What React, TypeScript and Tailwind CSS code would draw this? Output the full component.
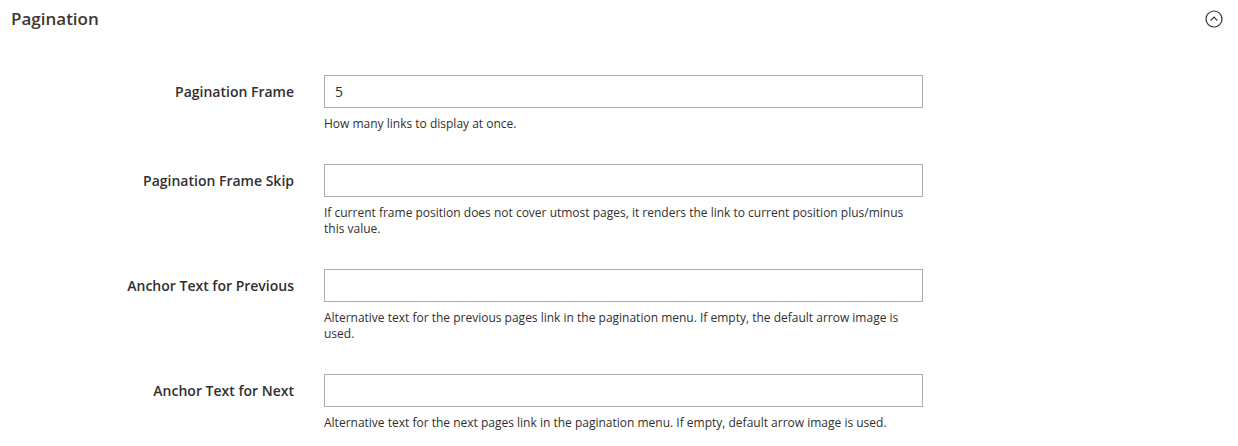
import React from "react";

const rows = [
  { label: "Pagination Frame", value: "5", note: "How many links to display at once." },
  {
    label: "Pagination Frame Skip",
    value: "",
    note: "If current frame position does not cover utmost pages, it renders the link to current position plus/minus this value.",
  },
  {
    label: "Anchor Text for Previous",
    value: "",
    note: "Alternative text for the previous pages link in the pagination menu. If empty, the default arrow image is used.",
  },
  {
    label: "Anchor Text for Next",
    value: "",
    note: "Alternative text for the next pages link in the pagination menu. If empty, default arrow image is used.",
  },
];

export default function App() {
  return (
    <div className="w-[1238px] h-[446px] bg-white overflow-hidden font-['Open_Sans',sans-serif] text-[#303030]">
      <div className="h-[37px] flex items-center justify-between pl-[11px] pr-[15px]">
        <span className="text-[17px] leading-[20px] font-semibold text-[#41362f]">Pagination</span>
        <svg width="18" height="18" viewBox="0 0 18 18" className="mt-[1px]">
          <circle cx="9" cy="9" r="8" fill="none" stroke="#303030" strokeWidth="1.2" />
          <path d="M5.6 10.6 L9 7.2 L12.4 10.6" fill="none" stroke="#303030" strokeWidth="1.2" />
        </svg>
      </div>
      <div className="mt-[38px] flex flex-col gap-[32px]">
        {rows.map((r) => (
          <div key={r.label} className="grid grid-cols-[294px_599px] gap-x-[30px]">
            <div className="h-[33px] flex items-center justify-end text-[14px] font-semibold text-[#303030]">
              {r.label}
            </div>
            <div>
              <div className="h-[33px] border border-[#adadad] bg-white flex items-center px-[10px] text-[14px]">
                {r.value}
              </div>
              <div className="mt-[8px] text-[12px] leading-[16px] text-[#303030]">{r.note}</div>
            </div>
          </div>
        ))}
      </div>
    </div>
  );
}
